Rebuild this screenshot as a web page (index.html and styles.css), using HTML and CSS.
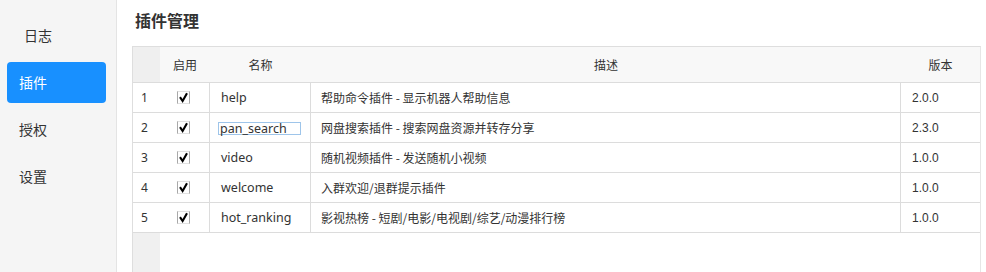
FILE: index.html
```html
<!DOCTYPE html>
<html lang="zh-CN">
<head>
<meta charset="utf-8">
<title>插件管理</title>
<link rel="stylesheet" href="styles.css">
</head>
<body>
<div class="app">
  <nav class="sidebar">
    <div class="nav-item nav-first">日志</div>
    <div class="nav-item active">插件</div>
    <div class="nav-item">授权</div>
    <div class="nav-item">设置</div>
  </nav>
  <main class="main">
    <h1 class="title">插件管理</h1>
    <div class="grid">
      <table class="plugins">
        <colgroup>
          <col class="c-num"><col class="c-chk"><col class="c-name"><col class="c-desc"><col class="c-ver">
        </colgroup>
        <thead>
          <tr>
            <th class="corner"></th>
            <th>启用</th>
            <th>名称</th>
            <th>描述</th>
            <th>版本</th>
          </tr>
        </thead>
        <tbody>
          <tr>
            <td class="num">1</td>
            <td class="chk"><span class="box"><svg viewBox="0 0 13 13" width="13" height="13"><path d="M3 6.2 L5.6 10 L10 2.2" fill="none" stroke="#000" stroke-width="2.1"/></svg></span></td>
            <td class="name">help</td>
            <td class="desc">帮助命令插件 - 显示机器人帮助信息</td>
            <td class="ver">2.0.0</td>
          </tr>
          <tr>
            <td class="num">2</td>
            <td class="chk"><span class="box"><svg viewBox="0 0 13 13" width="13" height="13"><path d="M3 6.2 L5.6 10 L10 2.2" fill="none" stroke="#000" stroke-width="2.1"/></svg></span></td>
            <td class="name"><span class="editor">pan_search</span></td>
            <td class="desc">网盘搜索插件 - 搜索网盘资源并转存分享</td>
            <td class="ver">2.3.0</td>
          </tr>
          <tr>
            <td class="num">3</td>
            <td class="chk"><span class="box"><svg viewBox="0 0 13 13" width="13" height="13"><path d="M3 6.2 L5.6 10 L10 2.2" fill="none" stroke="#000" stroke-width="2.1"/></svg></span></td>
            <td class="name">video</td>
            <td class="desc">随机视频插件 - 发送随机小视频</td>
            <td class="ver">1.0.0</td>
          </tr>
          <tr>
            <td class="num">4</td>
            <td class="chk"><span class="box"><svg viewBox="0 0 13 13" width="13" height="13"><path d="M3 6.2 L5.6 10 L10 2.2" fill="none" stroke="#000" stroke-width="2.1"/></svg></span></td>
            <td class="name">welcome</td>
            <td class="desc">入群欢迎/退群提示插件</td>
            <td class="ver">1.0.0</td>
          </tr>
          <tr>
            <td class="num">5</td>
            <td class="chk"><span class="box"><svg viewBox="0 0 13 13" width="13" height="13"><path d="M3 6.2 L5.6 10 L10 2.2" fill="none" stroke="#000" stroke-width="2.1"/></svg></span></td>
            <td class="name">hot_ranking</td>
            <td class="desc">影视热榜 - 短剧/电影/电视剧/综艺/动漫排行榜</td>
            <td class="ver">1.0.0</td>
          </tr>
        </tbody>
      </table>
    </div>
  </main>
</div>
</body>
</html>
```
FILE: styles.css
```css
html, body {
  margin: 0;
  padding: 0;
  height: 100%;
  overflow: hidden;
  background: #ffffff;
  font-family: "Noto Sans", "Noto Sans CJK SC", sans-serif;
  color: #333333;
}

.app {
  display: flex;
  height: 272px;
}

.sidebar {
  flex: none;
  background: #f5f5f5;
  border-right: 1px solid #e4e4e4;
  padding: 15px 10px 0 7px;
  width: 99px;
  display: flex;
  flex-direction: column;
  gap: 6px;
}

.nav-item {
  height: 41px;
  line-height: 41px;
  padding-left: 12px;
  font-size: 14px;
  color: #333333;
  border-radius: 4px;
  font-family: "Noto Sans CJK SC", sans-serif;
}

.nav-first {
  padding-left: 17px;
}

.nav-item.active {
  background: #1890ff;
  color: #ffffff;
}

.main {
  flex: 1;
  padding: 0 5px 0 15px;
  display: flex;
  flex-direction: column;
  min-width: 0;
}

.title {
  margin: 8px 0 0 3px;
  height: 38px;
  font-size: 16px;
  line-height: 24px;
  font-weight: bold;
  color: #333333;
  font-family: "Noto Sans CJK SC", sans-serif;
}

.grid {
  flex: 1;
  border: 1px solid #dedede;
  border-right-color: #e6e6e6;
  border-bottom: none;
  background: linear-gradient(to right, #f0f0f0 0, #f0f0f0 27px, #ffffff 27px);
  width: 847px;
}

.plugins {
  border-collapse: separate;
  border-spacing: 0;
  table-layout: fixed;
  width: 847px;
  font-size: 12px;
}

.c-num { width: 27px; }
.c-chk { width: 50px; }
.c-name { width: 101px; }
.c-desc { width: 590px; }
.c-ver { width: 79px; }

.plugins th {
  height: 35px;
  padding: 0;
  font-weight: normal;
  text-align: center;
  background: #f8f8f8;
  border-bottom: 1px solid #dcdcdc;
  color: #333333;
  font-family: "Noto Sans CJK SC", sans-serif;
}

.plugins th.corner {
  background: #efefef;
}

.plugins td {
  height: 29px;
  padding: 0;
  background: #ffffff;
  border-bottom: 1px solid #dcdcdc;
  white-space: nowrap;
  vertical-align: middle;
}

.plugins td.num {
  padding-left: 8px;
}

.plugins td.chk {
  border-right: 1px solid #dcdcdc;
  text-align: center;
  padding-right: 2px;
}

.box {
  display: inline-block;
  width: 13px;
  height: 13px;
  box-sizing: border-box;
  border: 1px solid #a8a8a8;
  border-top-color: #e2e2e2;
  border-bottom-color: #e2e2e2;
  vertical-align: middle;
  position: relative;
  top: -1px;
}

.box svg {
  display: block;
  margin: -1px 0 0 -1px;
}

.plugins td.name {
  padding-left: 11px;
  border-right: 1px solid #dcdcdc;
  font-size: 12.5px;
  color: #333333;
}

.editor {
  display: inline-block;
  width: 83px;
  height: 13px;
  line-height: 11px;
  box-sizing: border-box;
  border: 1px solid #9ec5ea;
  padding-left: 1px;
  margin-left: -3px;
  vertical-align: middle;
}

.plugins td.desc {
  padding-left: 10px;
  border-right: 1px solid #dcdcdc;
  font-family: "Noto Sans CJK SC", sans-serif;
}

.plugins td.ver {
  padding-left: 11px;
  font-family: "Liberation Sans", sans-serif;
}
```
